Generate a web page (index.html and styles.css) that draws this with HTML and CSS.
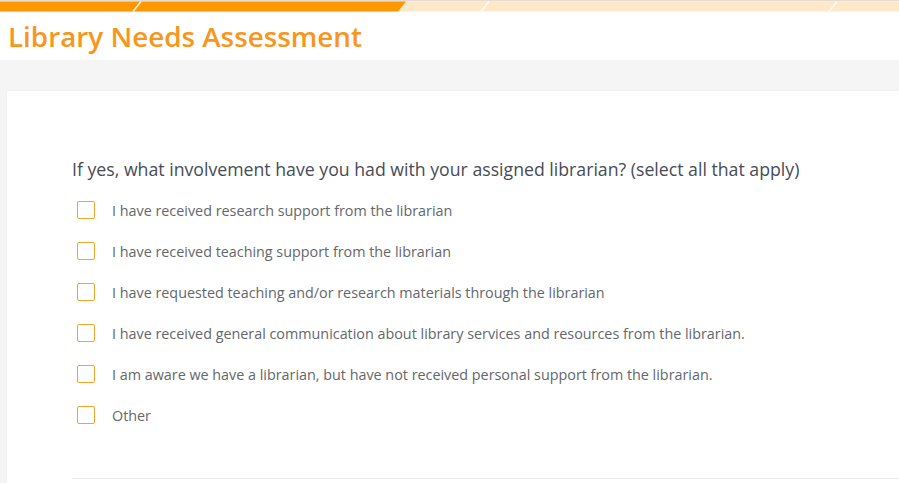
FILE: index.html
```html
<!DOCTYPE html>
<html>
<head>
<meta charset="utf-8">
<link rel="stylesheet" href="styles.css">
</head>
<body>
<header class="header">
  <svg class="topbar" width="899" height="12" viewBox="0 0 899 12">
    <rect x="0" y="0" width="899" height="1.5" fill="#e6dcd2"/>
    <rect x="0" y="1.5" width="899" height="10" fill="#fde8c9"/>
    <polygon points="0,1.5 406,1.5 398,11.5 0,11.5" fill="#ff9800"/>
    <line x1="141" y1="1.5" x2="133" y2="11.5" stroke="#fff3dc" stroke-width="1.5"/>
    <line x1="489" y1="1.5" x2="481" y2="11.5" stroke="#fffaf2" stroke-width="1.5"/>
    <line x1="837" y1="1.5" x2="829" y2="11.5" stroke="#fffaf2" stroke-width="1.5"/>
  </svg>
  <h1 class="title">Library Needs Assessment</h1>
</header>
<main class="page">
  <section class="card">
    <div class="question">
      <h2 class="prompt">If yes, what involvement have you had with your assigned librarian? (select all that apply)</h2>
      <ul class="options">
        <li class="option"><span class="box"></span><span class="label">I have received research support from the librarian</span></li>
        <li class="option"><span class="box"></span><span class="label">I have received teaching support from the librarian</span></li>
        <li class="option"><span class="box"></span><span class="label">I have requested teaching and/or research materials through the librarian</span></li>
        <li class="option"><span class="box"></span><span class="label">I have received general communication about library services and resources from the librarian.</span></li>
        <li class="option"><span class="box"></span><span class="label">I am aware we have a librarian, but have not received personal support from the librarian.</span></li>
        <li class="option"><span class="box"></span><span class="label">Other</span></li>
      </ul>
    </div>
  </section>
</main>
</body>
</html>
```

FILE: styles.css
```css
* { box-sizing: border-box; }
html, body { margin: 0; padding: 0; }
body {
  font-family: "Open Sans", "Noto Sans", sans-serif;
  background: #f5f5f5;
  width: 899px;
  height: 483px;
  overflow: hidden;
}
.header {
  background: #fff;
  height: 60px;
  display: flex;
  flex-direction: column;
}
.topbar { display: block; }
.title {
  margin: 6px 0 0 8px;
  font-weight: 600;
  font-size: 27.8px;
  line-height: 36px;
  color: #f7961c;
  letter-spacing: 0;
}
.page {
  padding: 31px 0 0 7px;
}
.card {
  background: #fff;
  box-shadow: 0 0 2px rgba(0,0,0,0.06);
  height: 400px;
  padding: 65px 0 0 65px;
}
.question {
  border-bottom: 1px solid #e9e9e9;
  padding-bottom: 51px;
}
.prompt {
  margin: 0 0 16px 0;
  font-weight: 400;
  font-size: 17.7px;
  line-height: 26px;
  color: #474c57;
}
.options {
  list-style: none;
  margin: 0;
  padding: 0;
  display: flex;
  flex-direction: column;
  gap: 17px;
}
.option {
  display: flex;
  align-items: center;
  gap: 17px;
  height: 24px;
  padding-left: 5px;
}
.box {
  width: 18px;
  height: 18px;
  border: 1.5px solid #f2a52a;
  border-radius: 2px;
  flex: none;
}
.label {
  font-size: 14.35px;
  color: #64676c;
}
```
